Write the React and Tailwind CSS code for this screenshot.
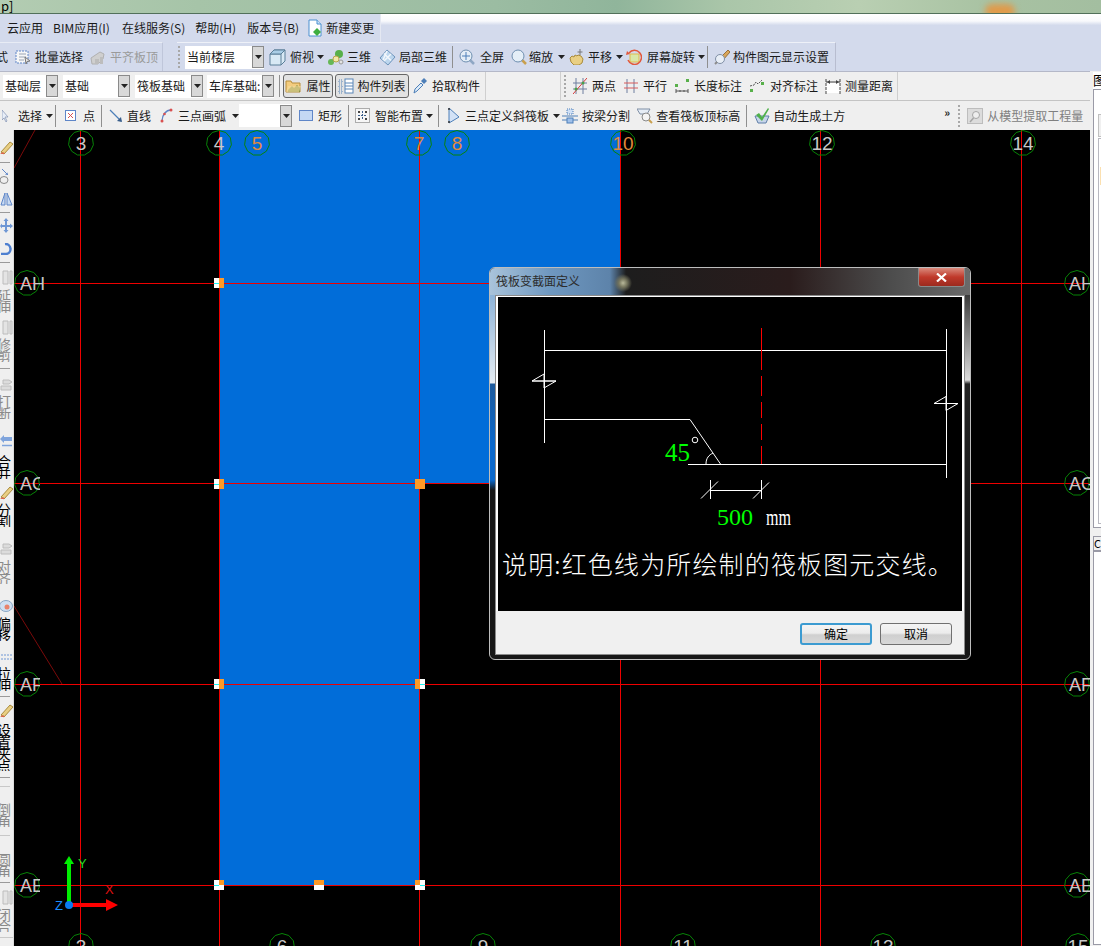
import React from "react";

const Svg = ({ w = 16, h = 16, children, className = "" }) => (
  <svg width={w} height={h} viewBox={`0 0 ${w} ${h}`} className={`shrink-0 ${className}`}>
    {children}
  </svg>
);

// toolbar icons
const NewDocIcon = () => (
  <Svg w={14} h={18}>
    <path d="M1 1h8l4 4v12H1z" fill="#fff" stroke="#4a90d0" />
    <path d="M9 1v4h4" fill="#cfe4f7" stroke="#4a90d0" />
    <path d="M9 9l4 4-4 4-4-4z" fill="#3fae3f" />
  </Svg>
);
const BatchIcon = ({ className }) => (
  <Svg className={className}>
    <rect x="1" y="2" width="12" height="12" fill="#f7f7f7" stroke="#5f86c8" strokeDasharray="2 1" />
    <path d="M4 5h7M4 8h7M4 11h5" stroke="#9aa5b5" />
    <path d="M10 8l5 4-3 .5-1 2.5z" fill="#e8e8e8" stroke="#777" />
  </Svg>
);
const AlignIcon = ({ className }) => (
  <Svg w={15} className={className}>
    <path d="M1 9l9-6 4 2-1 5-5 5H2z" fill="#cfcfcf" stroke="#b0b0b0" />
    <path d="M5 10h4v5H5zM10 8h3v7h-3z" fill="#bdbdbd" />
  </Svg>
);
const CubeIcon = ({ className }) => (
  <Svg w={17} h={17} className={className}>
    <path d="M1 5l4-4h11v11l-4 4H1z" fill="#d8e9f5" stroke="#5a7f98" />
    <path d="M1 5h11v11M12 5l4-4" fill="none" stroke="#5a7f98" />
    <path d="M1 5l4-4h11l-4 4z" fill="#a9cde6" stroke="#5a7f98" />
  </Svg>
);
const ThreeDIcon = ({ className }) => (
  <Svg w={17} h={17} className={className}>
    <path d="M3 14L13 4" stroke="#9c9c9c" strokeWidth="2" />
    <circle cx="12" cy="5" r="4" fill="#58b04a" />
    <circle cx="4" cy="13" r="3" fill="#66b755" />
    <circle cx="9" cy="10" r="3" fill="#f2e9a8" stroke="#b9a54a" />
    <circle cx="14" cy="13" r="2" fill="#e3e3e3" stroke="#999" />
  </Svg>
);
const Local3DIcon = ({ className }) => (
  <Svg w={17} h={17} className={className}>
    <path d="M8 1l8 7-7 8-8-7z" fill="#bcd6ee" stroke="#6d94bb" />
    <path d="M5 4.500l7 7M8 2l-4 9M12 5l-7 7" stroke="#f2f7fc" strokeWidth="1.500" />
  </Svg>
);
const GlassIcon = ({ className, handle = "#c9a04e", children }) => (
  <Svg className={className}>
    <path d="M10 10l5 5" stroke={handle} strokeWidth="2.500" />
    <circle cx="7" cy="7" r="6" fill="#e4eef7" stroke="#6f8fb0" />
    {children}
  </Svg>
);
const HandIcon = ({ className }) => (
  <Svg w={15} className={className}>
    <path d="M1 9l2-2 2 1 1-2 2 1 1-1 3 1 2 3-1 4-3 2H5L2 13z" fill="#e9cf83" stroke="#a98b3c" />
    <path d="M11 0v6M8.500 3h5" stroke="#777" />
  </Svg>
);
const RotateIcon = ({ className }) => (
  <Svg className={className}>
    <rect x="4" y="5" width="9" height="8" fill="#d9e8a8" stroke="#e2b94c" />
    <path d="M3 4a7 7 0 1 1-1 7" fill="none" stroke="#e2583c" strokeWidth="1.500" />
    <path d="M1 2l3 3-4 1z" fill="#e2583c" />
  </Svg>
);
const DisplayIcon = ({ className }) => (
  <Svg className={className}>
    <path d="M14 1l2 2-7 8-3-2z" fill="#d9a65a" stroke="#99703a" />
    <circle cx="6" cy="10" r="4.500" fill="#e8eef6" stroke="#7f8fa5" />
    <path d="M1 15l2-2" stroke="#8c8c8c" strokeWidth="2" />
  </Svg>
);
const FolderIcon = () => (
  <Svg>
    <path d="M1 3h5l1 2h8v9H1z" fill="#f3cc7f" stroke="#b88d3a" />
    <path d="M3 12l4-4 2 2 3-3 3 3v4H3z" fill="#6e8a3a" opacity=".8" />
    <path d="M1 14l2-6h13l-2 6z" fill="#f7dc9e" opacity=".6" />
  </Svg>
);
const ListIcon = () => (
  <Svg>
    <path d="M1 2h3v3H1zM1 7h3v3H1zM1 12h3v3H1z" fill="none" stroke="#5a86b8" strokeDasharray="1 1" />
    <rect x="7" y="1" width="8" height="14" fill="#fff" stroke="#5a86b8" />
    <path d="M7 5h8M7 8h8M7 11h8" stroke="#5a86b8" />
  </Svg>
);
const PickIcon = ({ className }) => (
  <Svg w={14} className={className}>
    <path d="M1 15l1-4 6-6 2 2-6 6z" fill="#dcebf8" stroke="#4d7fb8" />
    <path d="M8 3l3-3 3 3-3 3z" fill="#4d7fb8" />
  </Svg>
);
const TwoPointIcon = ({ className }) => (
  <Svg w={14} className={className}>
    <path d="M3 0v16M10 0v16M0 5h14M0 11h14" stroke="#6f7f9f" />
    <path d="M0 16L14 0" stroke="#d83a3a" />
    <circle cx="3" cy="11" r="1.500" fill="#4aa04a" />
    <circle cx="10" cy="5" r="1.500" fill="#4aa04a" />
  </Svg>
);
const ParallelIcon = ({ className }) => (
  <Svg w={14} className={className}>
    <path d="M3 1v14M10 1v14" stroke="#6f7f9f" />
    <path d="M0 5h14M0 10h14" stroke="#d85a5a" />
  </Svg>
);
const LengthIcon = ({ className }) => (
  <Svg w={14} className={className}>
    <rect x="0" y="6" width="3" height="3" fill="#58b04a" />
    <rect x="11" y="1" width="3" height="3" fill="#58b04a" />
    <path d="M1 11v4M13 11v4M1 13h12" stroke="#555" />
    <path d="M4 13h2M8 13h2" stroke="#555" />
  </Svg>
);
const AlignDimIcon = ({ className }) => (
  <Svg className={className}>
    <rect x="1" y="11" width="3" height="3" fill="#58b04a" />
    <rect x="12" y="4" width="3" height="3" fill="#58b04a" />
    <path d="M1 8l4-1 2-3 2 2 4-4" fill="none" stroke="#555" strokeDasharray="2 1" />
  </Svg>
);
const MeasureIcon = ({ className }) => (
  <Svg className={className}>
    <rect x="1" y="5" width="14" height="10" fill="#fff" />
    <path d="M1 1v15M15 1v15" stroke="#444" strokeDasharray="3 1" />
    <path d="M1 4h14" stroke="#444" />
    <path d="M2 4l3-2v4zM14 4l-3-2v4z" fill="#444" />
  </Svg>
);
const PointerIcon = ({ className }) => (
  <Svg w={7} h={12} className={className}>
    <path d="M0 0l6 7H3l2 4-1 1-2-4-2 2z" fill="#e8eef8" stroke="#7f8fb0" strokeWidth=".7" />
  </Svg>
);
const PointIcon = ({ className }) => (
  <Svg w={11} h={11} className={className}>
    <rect x=".5" y=".5" width="10" height="10" fill="#fff" stroke="#5f86c8" />
    <path d="M3 3l5 5M8 3l-5 5" stroke="#d85050" />
  </Svg>
);
const LineIcon = ({ className }) => (
  <Svg w={14} h={14} className={className}>
    <path d="M1 1l11 11" stroke="#4d7fb8" strokeWidth="1.300" />
    <path d="M13 13l-5-1 4-4z" fill="#3a5f8c" />
  </Svg>
);
const ArcIcon = ({ className }) => (
  <Svg w={13} h={15} className={className}>
    <path d="M2 13C2 7 6 2 11 2" fill="none" stroke="#5f86c8" strokeWidth="1.300" />
    <circle cx="2" cy="13" r="1.500" fill="#d85050" />
    <circle cx="11" cy="2" r="1.500" fill="#d85050" />
    <circle cx="4.500" cy="6" r="1.300" fill="#d85050" />
  </Svg>
);
const RectIcon = ({ className }) => (
  <Svg w={14} h={11} className={className}>
    <rect x=".5" y=".5" width="13" height="10" fill="#c4d8f4" stroke="#5f86c8" />
  </Svg>
);
const SmartIcon = ({ className }) => (
  <Svg w={15} h={15} className={className}>
    <rect x=".5" y=".5" width="14" height="14" fill="#f6f6f6" stroke="#666" strokeDasharray="1 1" />
    <path d="M7.500 3v9M3 7.500h9" stroke="#3a5f8c" strokeDasharray="2 1" />
    <path d="M3 3h2v2H3zM10 3h2v2h-2zM3 10h2v2H3zM10 10h2v2h-2z" fill="#444" />
  </Svg>
);
const SlopeIcon = ({ className }) => (
  <Svg w={13} h={17} className={className}>
    <path d="M2 1l10 9-10 6z" fill="#d3e2f6" stroke="#4d7fb8" />
    <circle cx="2" cy="2" r="1" fill="#333" />
    <circle cx="2" cy="15" r="1" fill="#333" />
  </Svg>
);
const BeamIcon = ({ className }) => (
  <Svg className={className}>
    <rect x="5" y="1" width="6" height="5" fill="#cfe0f6" stroke="#4d7fb8" strokeDasharray="1 1" />
    <path d="M0 8h16M0 12h16" stroke="#4d7fb8" />
    <rect x="5" y="10" width="6" height="5" fill="#9fc0ea" stroke="#4d7fb8" />
  </Svg>
);
const ViewTopIcon = ({ className }) => (
  <Svg className={className}>
    <path d="M0 1h13l-3 5H3z" fill="#e6edf6" stroke="#7f8fa5" />
    <circle cx="9" cy="9" r="4" fill="#f4f4f4" stroke="#8a8a8a" />
    <path d="M12 12l3 3" stroke="#c9a04e" strokeWidth="2" />
  </Svg>
);
const AutoIcon = ({ className }) => (
  <Svg className={className}>
    <path d="M1 8h14l-3 7H4z" fill="#c7d5ea" stroke="#5f7fa8" />
    <path d="M2 7l3-2 3 4 6-9 1 1-7 12z" fill="#4fb04a" />
  </Svg>
);
const ExtractIcon = ({ className }) => (
  <Svg className={className}>
    <rect x=".5" y=".5" width="15" height="15" fill="#dcdcdc" stroke="#bdbdbd" />
    <circle cx="9" cy="7" r="3.500" fill="#eee" stroke="#a5a5a5" />
    <path d="M6.500 10L3 14" stroke="#a5a5a5" strokeWidth="1.500" />
  </Svg>
);

const Caret = ({ className = "" }) => (
  <svg width="7" height="4" viewBox="0 0 7 4" className={`shrink-0 ${className}`}>
    <path d="M0 0h7L3.500 4z" fill="#222" />
  </svg>
);
const Sep = ({ className = "" }) => <div className={`h-[22px] w-px shrink-0 bg-[#8f8f8f] ${className}`} />;
const Grip = ({ className = "" }) => (
  <div className={`flex h-[22px] w-[4px] shrink-0 flex-col justify-between ${className}`}>
    {[0, 1, 2, 3, 4, 5].map((i) => (
      <div key={i} className="h-[2px] w-[2px] bg-[#a8a8a8]" />
    ))}
  </div>
);

const Select = ({ text, className = "", btn = "h-[22px]" }) => (
  <div className={`flex h-[23px] shrink-0 items-center justify-between bg-white ${className}`}>
    <span className="overflow-hidden whitespace-nowrap pl-[2px]">{text}</span>
    <div className={`flex w-[12px] shrink-0 items-center justify-center border border-[#8a8a8a] bg-[#d8d8d8] ${btn}`}>
      <Caret />
    </div>
  </div>
);

// left tool strip
const LeftSep = ({ className }) => <div className={`h-px w-[10px] shrink-0 bg-[#9a9a9a] ${className}`} />;
const LeftText = ({ className, children }) => (
  <div className={`-ml-[3px] w-[15px] shrink-0 overflow-hidden whitespace-normal break-all text-[14px] leading-[12px] ${className}`}>{children}</div>
);
const LeftPencil = ({ className }) => (
  <Svg w={13} h={15} className={className}>
    <path d="M1 12L10 2l3 2-9 10z" fill="#e9cf83" stroke="#a98b3c" />
    <path d="M0 14l3-2 2 2z" fill="#d8654c" />
  </Svg>
);
const LeftTrim = ({ className }) => (
  <Svg w={13} h={17} className={className}>
    <path d="M2 1l6 6" stroke="#5f86c8" />
    <path d="M8 7l-3-.5 2.500-2z" fill="#5f86c8" />
    <ellipse cx="4" cy="12" rx="4" ry="3.500" fill="none" stroke="#8a8a8a" />
  </Svg>
);
const LeftMirror = ({ className }) => (
  <Svg w={13} h={15} className={className}>
    <path d="M1 13L5 1v12zM7 1l5 12H7z" fill="#c8daf2" stroke="#5f86c8" />
  </Svg>
);
const LeftMove = ({ className }) => (
  <Svg w={13} h={15} className={className}>
    <path d="M6 0l2.500 3H7v4h3V5.500L13 8l-3 2.500V9H7v3h1.500L6 15l-2.500-3H5V9H2v1.500L0 8l2-2.500V7h3V3H3.500z" fill="#6f97d4" />
  </Svg>
);
const LeftRotate = ({ className }) => (
  <Svg w={13} h={12} className={className}>
    <path d="M5 1a5 5 0 0 1 1 10H1" fill="none" stroke="#4d7fd0" strokeWidth="2.500" />
  </Svg>
);
const LeftArrow = ({ className }) => (
  <Svg w={13} h={12} className={className}>
    <path d="M0 4l4-4v2h8v4H4v2z" fill="#7fa4dc" />
    <path d="M2 10.500h10" stroke="#7fa4dc" strokeWidth="1.500" />
  </Svg>
);
const LeftCloud = ({ className }) => (
  <Svg w={13} h={12} className={className}>
    <ellipse cx="6" cy="6" rx="6.500" ry="5.500" fill="#cfe0f2" stroke="#8aa6c4" />
    <circle cx="7" cy="7" r="2.500" fill="#e8836c" />
  </Svg>
);
const LeftStretch = ({ className }) => (
  <Svg w={13} h={11} className={className}>
    <path d="M1 3h11M1 7h11" stroke="#6f97d4" strokeDasharray="2 1" />
  </Svg>
);
const LeftGray = ({ className }) => (
  <Svg w={13} h={15} className={className}>
    <path d="M3 1h5v13H3zM10 1h2v13h-2z" fill="#e4e4e4" stroke="#bcbcbc" />
  </Svg>
);
const LeftGrayArrow = ({ className }) => (
  <Svg w={13} h={13} className={className}>
    <path d="M3 2h6l3 2-3 2H3zM1 8h10v4H1z" fill="#dcdcdc" stroke="#bcbcbc" />
  </Svg>
);

const LeftStrip = () => (
  <div className="flex h-[816px] w-[14px] shrink-0 flex-col overflow-hidden border-r border-[#dcdcdc] bg-[#efefef] text-black">
    <LeftPencil className="mt-[10px]" />
    <LeftSep className="mt-[7px]" />
    <LeftTrim className="mt-[5px]" />
    <LeftMirror className="mt-[7px]" />
    <LeftSep className="mt-[5px]" />
    <LeftMove className="mt-[5px]" />
    <LeftRotate className="mt-[10px]" />
    <LeftSep className="mt-[7px]" />
    <LeftGray className="mt-[7px]" />
    <LeftText className="mt-[4px] text-[#8a8a8a]">延伸</LeftText>
    <LeftGray className="mt-[7px]" />
    <LeftText className="mt-[3px] text-[#8a8a8a]">修剪</LeftText>
    <LeftSep className="mt-[6px]" />
    <LeftGrayArrow className="mt-[9px]" />
    <LeftText className="mt-[4px] text-[#8a8a8a]">打断</LeftText>
    <LeftArrow className="mt-[16px]" />
    <LeftText className="mt-[8px]">合并</LeftText>
    <LeftPencil className="mt-[6px]" />
    <LeftText className="mt-[3px]">分割</LeftText>
    <LeftGrayArrow className="mt-[15px]" />
    <LeftText className="mt-[5px] text-[#8a8a8a]">对齐</LeftText>
    <LeftCloud className="mt-[16px]" />
    <LeftText className="mt-[5px]">偏移</LeftText>
    <LeftStretch className="mt-[11px]" />
    <LeftText className="mt-[4px]">拉伸</LeftText>
    <LeftSep className="mt-[5px]" />
    <LeftPencil className="mt-[6px]" />
    <LeftText className="mt-[5px]">设置夹点</LeftText>
    <LeftSep className="mt-[6px]" />
    <LeftSep className="mt-[8px] bg-[#c8c8c8]" />
    <LeftText className="mt-[16px] text-[#8a8a8a]">倒角</LeftText>
    <LeftSep className="mt-[8px] bg-[#c8c8c8]" />
    <LeftText className="mt-[17px] text-[#8a8a8a]">圆角</LeftText>
    <LeftSep className="mt-[5px]" />
    <LeftGray className="mt-[7px]" />
    <LeftText className="mt-[3px] text-[#8a8a8a]">闭合</LeftText>
    <LeftSep className="mt-[5px] w-[14px] bg-[#c8c8c8]" />
  </div>
);

// CAD canvas
const polygon = (cx, cy, r = 12.5, n = 11) =>
  Array.from({ length: n }, (_, i) => {
    const a = (i / n) * Math.PI * 2 - Math.PI / 2;
    return `${(cx + r * Math.cos(a)).toFixed(1)},${(cy + r * Math.sin(a)).toFixed(1)}`;
  }).join(" ");

const Axis = ({ x, y, label, color = "#c8c8c8", clip, start }) => (
  <g>
    <polygon points={polygon(x, y)} fill="none" stroke="#078407" />
    <text
      x={start ?? x}
      y={y + 7}
      textAnchor={start ? "start" : "middle"}
      fontSize={start ? 18 : 19}
      fontFamily="'Liberation Sans', sans-serif"
      fill={color}
      clipPath={clip}
    >
      {label}
    </text>
  </g>
);

const W = "#ffffff";
const O = "#ff9a27";
const Handle = ({ x, y, q }) => (
  <g shapeRendering="crispEdges">
    <rect x={x - 5} y={y - 5} width="5" height="5" fill={q[0]} />
    <rect x={x} y={y - 5} width="5" height="5" fill={q[1]} />
    <rect x={x - 5} y={y} width="5" height="5" fill={q[2]} />
    <rect x={x} y={y} width="5" height="5" fill={q[3]} />
    {q[0] === W && q[2] === W && <rect x={x - 5} y={y} width="5" height="1" fill="#19f5f5" />}
    {q[1] === W && q[3] === W && <rect x={x} y={y} width="5" height="1" fill="#19f5f5" />}
  </g>
);

const CadCanvas = () => (
  <svg width="1076" height="816" viewBox="14 130 1076 816" className="block bg-black">
    <defs>
      <clipPath id="leftLabel">
        <rect x="14" y="130" width="26" height="816" />
      </clipPath>
    </defs>
    <rect x="219" y="130" width="201" height="755" fill="#016dd9" />
    <rect x="420" y="130" width="200" height="354" fill="#016dd9" />
    <path d="M14 168L35 130M14 606L62 684" stroke="#7a0a0a" fill="none" />
    <g stroke="#ee0000" shapeRendering="crispEdges">
      {[80.5, 219.5, 419.5, 620.5, 820.5, 1021.5].map((x) => (
        <line key={x} x1={x} y1="130" x2={x} y2="946" />
      ))}
      {[283.5, 483.5, 684.5, 885.5].map((y) => (
        <line key={y} x1="14" y1={y} x2="1090" y2={y} />
      ))}
    </g>

    {[
      [81, "3"],
      [219, "4"],
      [257, "5", "#e08a3c"],
      [419, "7", "#e08a3c"],
      [457, "8", "#e08a3c"],
      [623, "10", "#e08a3c"],
      [822, "12"],
      [1023, "14"],
    ].map(([x, l, c]) => (
      <Axis key={l} x={x} y={143} label={l} color={c} />
    ))}
    {[
      [81, "3"],
      [282, "6"],
      [483, "9"],
      [683, "11"],
      [883, "13"],
      [1078, "15"],
    ].map(([x, l]) => (
      <Axis key={l} x={x} y={946} label={l} />
    ))}
    <Axis x={27} y={283} label="AH" start={20} />
    <Axis x={27} y={483} label="AG" start={20} clip="url(#leftLabel)" />
    <Axis x={27} y={684} label="AF" start={20} clip="url(#leftLabel)" />
    <Axis x={27} y={885} label="AE" start={20} clip="url(#leftLabel)" />
    <Axis x={1077} y={283} label="AH" start={1069} />
    <Axis x={1077} y={483} label="AG" start={1069} />
    <Axis x={1077} y={684} label="AF" start={1069} />
    <Axis x={1077} y={885} label="AE" start={1069} />

    <Handle x={219} y={283} q={[W, O, W, O]} />
    <Handle x={219} y={484} q={[W, O, W, O]} />
    <Handle x={420} y={484} q={[O, O, O, O]} />
    <Handle x={219} y={684} q={[W, O, W, O]} />
    <Handle x={420} y={684} q={[O, W, O, W]} />
    <Handle x={219} y={885} q={[W, O, W, W]} />
    <Handle x={319} y={885} q={[O, O, W, W]} />
    <Handle x={420} y={885} q={[O, W, W, W]} />

    {/* coordinate gizmo */}
    <path d="M67 905v-41h-3l5-8 5 8h-3v41z" fill="#00ee00" />
    <path d="M69 903h37v-4l12 6-12 6v-4H69z" fill="#ff0000" />
    <circle cx="69" cy="905" r="4" fill="#0a7cf0" />
    <text x="55" y="910" fontSize="13" fontFamily="'Liberation Sans', sans-serif" fill="#1a8cff">Z</text>
    <text x="78" y="868" fontSize="13" fontFamily="'Liberation Sans', sans-serif" fill="#22dd22">Y</text>
    <text x="105" y="894" fontSize="13" fontFamily="'Liberation Sans', sans-serif" fill="#e01010">X</text>
  </svg>
);

// diagram inside the dialog, page coordinates shifted by the black panel origin
const SectionDiagram = () => (
  <svg width="464" height="246" viewBox="498 297 464 246" className="block">
    <g stroke="#fff" fill="none" shapeRendering="crispEdges">
      <path d="M544.500 330v113M946.500 329v149M544 350.500h403M544 419.500h146M688 464.500h259" />
      <path d="M710.500 480v19M761.500 480v19M710 490.500h52" />
    </g>
    <g stroke="#fff" fill="none">
      <path d="M690 419.500L720.500 464" />
      <path d="M532 381l12-7v14l12-7z" />
      <path d="M532 381h24" />
      <path d="M934 403.500l12-7v14l12-7z" />
      <path d="M934 403.500h24" />
      <path d="M706 464c0-6 3-9 7-11" />
      <path d="M701 498.500l17-17M753 498.500l16-16" />
      <circle cx="695" cy="440" r="2.800" />
    </g>
    <line x1="761.500" y1="328" x2="761.500" y2="464" stroke="#ff0000" strokeDasharray="42 6 20 6 16 6 16 6" shapeRendering="crispEdges" />
    <text x="665" y="461" fontSize="25" fontFamily="'Liberation Serif', serif" fill="#00ff00">45</text>
    <text x="717" y="525" fontSize="24" fontFamily="'Liberation Serif', serif" fill="#00ff00">500</text>
    <text x="766" y="525" fontSize="24" fontFamily="'Liberation Serif', serif" fill="#fff" textLength="25" lengthAdjust="spacingAndGlyphs">mm</text>
  </svg>
);

const Dialog = () => (
  <div className="absolute left-[475px] top-[137px] flex h-[393px] w-[482px] flex-col overflow-hidden rounded-[6px] border border-[#bdbdbd] bg-[#161616]">
    <div className="flex h-[27px] shrink-0 items-start justify-between bg-[radial-gradient(circle_at_133px_15px,#b8b89a_0,#77775f_4px,transparent_9px),linear-gradient(90deg,#a9c3da_0,#6f98c0_60px,#5d83aa_120px,#1d1d1d_136px,#2a1c1c_300px,#4c4c4c_400px,#6a6a6a_100%)]">
      <span className="pl-[6px] pt-[5px] text-[12px] leading-[16px] text-[#2c2c2c]">筏板变截面定义</span>
      <div className="mr-[5px] flex h-[19px] w-[47px] items-center justify-center rounded-b-[3px] border border-t-0 border-[#8a8a8a] bg-[linear-gradient(180deg,#d98a7c_0,#c0392b_50%,#9c2a1e_100%)]">
        <svg width="11" height="9" viewBox="0 0 11 9">
          <path d="M1 .500l9 8M10 .500l-9 8" stroke="#fff" strokeWidth="2.200" />
        </svg>
      </div>
    </div>
    <div className="flex h-[360px] shrink-0">
      <div className="w-[5px] shrink-0 bg-[linear-gradient(180deg,#8db3d8_0,#e6edf3_88px,#1d5a9c_89px,#0a68cc_150px,#0a68cc_185px,#161616_195px)]" />
      <div className="flex w-[470px] shrink-0 flex-col border border-[#8a8a8a] bg-white">
        <div className="mx-[2px] mt-[1px] h-[314px] shrink-0 bg-black">
          <SectionDiagram />
          <p className="whitespace-nowrap pl-[4px] pt-[3px] text-[25px] font-light leading-[34px] tracking-[1.15px] text-white">说明:红色线为所绘制的筏板图元交线。</p>
        </div>
        <div className="flex flex-1 justify-end gap-[8px] bg-[#f0f0f0] pr-[12px] pt-[12px]">
          <button className="h-[22px] w-[72px] rounded-[3px] border-2 border-[#3c9bd1] bg-[linear-gradient(180deg,#f4f4f4_0,#ececec_45%,#cfcfcf_55%,#d8d8d8_100%)] text-[12px] leading-[16px] text-black">确定</button>
          <button className="h-[22px] w-[72px] rounded-[3px] border border-[#707070] bg-[linear-gradient(180deg,#f4f4f4_0,#ececec_45%,#cfcfcf_55%,#d8d8d8_100%)] text-[12px] leading-[16px] text-black">取消</button>
        </div>
      </div>
      <div className="w-[5px] shrink-0 bg-[linear-gradient(180deg,#3a3a3a_0,#dddddd_85px,#222222_89px,#141414_100%)]" />
    </div>
  </div>
);

const RightPanel = () => (
  <div className="flex w-[11px] shrink-0 flex-col overflow-hidden bg-[#f0f0f0] pl-[3px] text-[13px] text-black">
    <div className="mt-[1px] h-[17px] w-[14px] shrink-0 overflow-hidden bg-white leading-[15px]">图</div>
    <div className="h-[439px] w-[12px] shrink-0 border border-[#9a9aa6] bg-white pl-[4px] pt-[24px]">
      <div className="h-[23px] w-[8px] border border-[#c0c0c0] bg-[#f0f0f0]" />
      <div className="mt-[1px] h-[386px] w-[8px] border border-[#b8b8c0] pl-[1px] pt-[28px]">
        <div className="h-[18px] w-[4px] bg-[#fbe0b0]" />
      </div>
    </div>
    <div className="mt-[8px] h-[15px] w-[12px] shrink-0 overflow-hidden border border-[#9a9aa6] text-[11px] leading-[13px]">C</div>
    <div className="h-[394px] w-[12px] shrink-0 border border-[#9a9aa6] bg-white" />
  </div>
);

export default function App() {
  return (
    <div className="flex h-[946px] w-[1101px] flex-col overflow-hidden whitespace-nowrap bg-[#f0f0f0] font-['Noto_Sans_CJK_SC','Liberation_Sans',sans-serif] text-[12px] leading-[16px] text-[#1a1a1a]">
      {/* window title strip */}
      <div className="relative h-[14px] shrink-0 overflow-hidden border-b border-[#51705a] bg-[linear-gradient(90deg,#b3ccb2_0,#a6c4a8_18%,#9bbca2_45%,#90b59b_56%,#aac6a9_66%,#b9cfb2_78%,#a8c2a2_90%,#a3bea0_100%)] pl-[1px] text-[13px] leading-[12px] text-black">
        p]
        <div className="absolute left-[985px] top-[4px] h-[14px] w-[30px] rounded-full bg-[#e09a4a] blur-[3px]" />
      </div>

      {/* menu bar */}
      <div className="flex h-[28px] shrink-0 items-stretch bg-[linear-gradient(180deg,#ffffff_0,#f8f9fc_25%,#d3daec_40%)]">
        <div className="flex w-[381px] items-center border-r border-[#e4e8f2] bg-[#d3daec] pl-[7px]">
          <span>云应用</span>
          <span className="ml-[10px] w-[60px]">BIM应用(I)</span>
          <span className="ml-[9px]">在线服务(S)</span>
          <span className="ml-[10px]">帮助(H)</span>
          <span className="ml-[11px]">版本号(B)</span>
          <span className="ml-[9px]"><NewDocIcon /></span>
          <span className="ml-[4px]">新建变更</span>
        </div>
      </div>

      {/* view toolbar */}
      <div className="flex h-[29px] shrink-0 items-stretch bg-[#d3daec]">
        <div className="flex w-[163px] items-center border-r border-t border-[#bfc6da] border-t-[#e8ecf5]">
          <div className="flex w-[8px] justify-end overflow-hidden">
            <span className="shrink-0">式</span>
          </div>
          <BatchIcon className="ml-[7px]" />
          <span className="ml-[4px]">批量选择</span>
          <AlignIcon className="ml-[7px]" />
          <span className="ml-[5px] text-[#9a9a9a]">平齐板顶</span>
        </div>
        <div className="ml-[14px] flex w-[659px] items-center border-r border-t border-[#b8bdd0] border-t-[#eef1f8] pl-[1px]">
          <Grip />
          <Select text="当前楼层" className="ml-[3px] w-[79px]" />
          <CubeIcon className="ml-[5px]" />
          <span className="ml-[4px]">俯视</span>
          <Caret className="ml-[3px]" />
          <ThreeDIcon className="ml-[3px]" />
          <span className="ml-[3px]">三维</span>
          <Local3DIcon className="ml-[8px]" />
          <span className="ml-[3px]">局部三维</span>
          <Sep className="ml-[5px]" />
          <GlassIcon className="ml-[6px]" handle="#8fa7c4">
            <path d="M7 3v8M3 7h8" stroke="#4d7fb8" />
          </GlassIcon>
          <span className="ml-[5px]">全屏</span>
          <GlassIcon className="ml-[7px]" />
          <span className="ml-[2px]">缩放</span>
          <Caret className="ml-[5px]" />
          <HandIcon className="ml-[4px]" />
          <span className="ml-[4px]">平移</span>
          <Caret className="ml-[4px]" />
          <RotateIcon className="ml-[3px]" />
          <span className="ml-[5px]">屏幕旋转</span>
          <Caret className="ml-[3px]" />
          <Sep className="ml-[2px]" />
          <DisplayIcon className="ml-[6px]" />
          <span className="ml-[3px]">构件图元显示设置</span>
        </div>
      </div>

      <div className="flex min-h-0 flex-1">
        <div className="flex w-[1090px] shrink-0 flex-col">
          {/* element selector and dimension toolbars */}
          <div className="flex h-[30px] shrink-0 items-stretch border-y border-y-[#b4b8c8] border-b-[#c4c4c4] bg-[#f0f0f0]">
            <div className="flex w-[486px] items-center border-r border-[#cfcfcf] bg-[#efefef] pl-[3px]">
              <Select text="基础层" className="w-[55px]" />
              <Select text="基础" className="ml-[5px] w-[67px]" />
              <Select text="筏板基础" className="ml-[5px] w-[68px]" />
              <Select text="车库基础:" className="ml-[4px] w-[67px]" />
              <Sep className="ml-[5px]" />
              <button className="ml-[3px] flex h-[24px] w-[50px] items-center justify-center gap-[5px] rounded-[3px] border border-[#666] bg-[#e2e2e2]">
                <FolderIcon />
                <span>属性</span>
              </button>
              <button className="ml-[2px] flex h-[24px] w-[74px] items-center justify-center gap-[3px] rounded-[3px] border border-[#666] bg-[#e2e2e2]">
                <ListIcon />
                <span>构件列表</span>
              </button>
              <PickIcon className="ml-[4px]" />
              <span className="ml-[5px]">拾取构件</span>
            </div>
            <div className="ml-[74px] flex w-[338px] items-center border-x border-[#cfcfcf] bg-[#efefef] pl-[3px]">
              <Grip />
              <TwoPointIcon className="ml-[5px]" />
              <span className="ml-[5px]">两点</span>
              <ParallelIcon className="ml-[8px]" />
              <span className="ml-[5px]">平行</span>
              <LengthIcon className="ml-[8px]" />
              <span className="ml-[5px]">长度标注</span>
              <AlignDimIcon className="ml-[7px]" />
              <span className="ml-[5px]">对齐标注</span>
              <MeasureIcon className="ml-[7px]" />
              <span className="ml-[4px]">测量距离</span>
            </div>
          </div>

          {/* draw toolbar */}
          <div className="flex h-[29px] shrink-0 items-center bg-[#efefef] pl-[2px]">
            <PointerIcon />
            <span className="ml-[9px] shrink-0">选择</span>
            <Caret className="ml-[4px]" />
            <Sep className="ml-[2px]" />
            <PointIcon className="ml-[9px]" />
            <span className="ml-[7px] shrink-0">点</span>
            <Sep className="ml-[6px]" />
            <LineIcon className="ml-[7px]" />
            <span className="ml-[4px] shrink-0">直线</span>
            <ArcIcon className="ml-[9px]" />
            <span className="ml-[5px] shrink-0">三点画弧</span>
            <Caret className="ml-[6px]" />
            <Select text="" className="w-[53px]" />
            <RectIcon className="ml-[7px]" />
            <span className="ml-[5px] shrink-0">矩形</span>
            <Sep className="ml-[6px]" />
            <SmartIcon className="ml-[6px]" />
            <span className="ml-[5px] shrink-0">智能布置</span>
            <Caret className="ml-[3px]" />
            <Sep className="ml-[5px]" />
            <SlopeIcon className="ml-[8px]" />
            <span className="ml-[5px] shrink-0">三点定义斜筏板</span>
            <Caret className="ml-[4px]" />
            <BeamIcon className="ml-[2px]" />
            <span className="ml-[4px] shrink-0">按梁分割</span>
            <ViewTopIcon className="ml-[7px]" />
            <span className="ml-[3px] shrink-0">查看筏板顶标高</span>
            <Sep className="ml-[6px]" />
            <AutoIcon className="ml-[7px]" />
            <span className="ml-[3px] shrink-0">自动生成土方</span>
            <span className="mb-[8px] ml-[99px] w-[8px] shrink-0 text-[11px] font-bold leading-[12px]">»</span>
            <Grip className="ml-[6px]" />
            <ExtractIcon className="ml-[5px]" />
            <span className="ml-[4px] shrink-0 text-[#808080]">从模型提取工程量</span>
          </div>

          {/* drawing area */}
          <div className="flex min-h-0 flex-1">
            <LeftStrip />
            <div className="relative h-[816px] w-[1076px]">
              <CadCanvas />
              <Dialog />
            </div>
          </div>
        </div>
        <RightPanel />
      </div>
    </div>
  );
}
